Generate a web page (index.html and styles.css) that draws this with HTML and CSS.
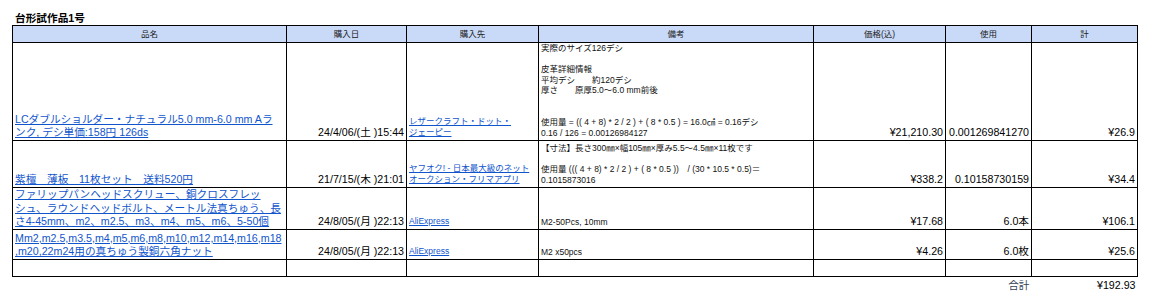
FILE: index.html
```html
<!DOCTYPE html>
<html lang="ja">
<head>
<meta charset="utf-8">
<title>台形試作品1号</title>
<link rel="stylesheet" href="styles.css">
</head>
<body>
<div class="sheet">
  <div class="title">台形試作品1号</div>
  <table class="grid">
    <colgroup>
      <col class="c-name"><col class="c-date"><col class="c-shop"><col class="c-note"><col class="c-price"><col class="c-use"><col class="c-sum">
    </colgroup>
    <thead>
      <tr class="r-head">
        <th>品名</th><th>購入日</th><th>購入先</th><th>備考</th><th>価格(込)</th><th>使用</th><th>計</th>
      </tr>
    </thead>
    <tbody>
      <tr class="r1">
        <td class="name"><a href="#">LCダブルショルダー・ナチュラル5.0 mm-6.0 mm Aラ<br>ンク, デシ単価:158円 126ds</a></td>
        <td class="num">24/4/06/(土 )15:44</td>
        <td class="shop"><a href="#">レザークラフト・ドット・<br>ジェーピー</a></td>
        <td class="note">実際のサイズ126デシ<br><br>皮革詳細情報<br>平均デシ　　約120デシ<br>厚さ　　原厚5.0～6.0 mm前後<br><br><br>使用量 = (( 4 + 8) * 2 / 2 ) + ( 8 * 0.5 ) = 16.0㎠ = 0.16デシ<br>0.16 / 126 = 0.00126984127</td>
        <td class="num">¥21,210.30</td>
        <td class="num">0.001269841270</td>
        <td class="num">¥26.9</td>
      </tr>
      <tr class="r2">
        <td class="name"><a href="#">紫檀　薄板　11枚セット　送料520円</a></td>
        <td class="num">21/7/15/(木 )21:01</td>
        <td class="shop"><a href="#">ヤフオク! - 日本最大級のネット<br>オークション・フリマアプリ</a></td>
        <td class="note">【寸法】長さ300㎜×幅105㎜×厚み5.5～4.5㎜×11枚です<br><br>使用量 ((( 4 + 8) * 2 / 2 ) + ( 8 * 0.5 ))　/ (30 * 10.5 * 0.5)＝<br>0.1015873016</td>
        <td class="num">¥338.2</td>
        <td class="num">0.10158730159</td>
        <td class="num">¥34.4</td>
      </tr>
      <tr class="r3">
        <td class="name"><a href="#">ファリップパンヘッドスクリュー、銅クロスフレッ<br>シュ、ラウンドヘッドボルト、メートル法真ちゅう、長<br>さ4-45mm、m2、m2.5、m3、m4、m5、m6、5-50個</a></td>
        <td class="num">24/8/05/(月 )22:13</td>
        <td class="shop"><a href="#">AliExpress</a></td>
        <td class="note">M2-50Pcs, 10mm</td>
        <td class="num">¥17.68</td>
        <td class="num">6.0本</td>
        <td class="num">¥106.1</td>
      </tr>
      <tr class="r4">
        <td class="name"><a href="#">Mm2,m2.5,m3.5,m4,m5,m6,m8,m10,m12,m14,m16,m18<br>,m20,22m24用の真ちゅう製銅六角ナット</a></td>
        <td class="num">24/8/05/(月 )22:13</td>
        <td class="shop"><a href="#">AliExpress</a></td>
        <td class="note">M2 x50pcs</td>
        <td class="num">¥4.26</td>
        <td class="num">6.0枚</td>
        <td class="num">¥25.6</td>
      </tr>
      <tr class="r5">
        <td></td><td></td><td></td><td></td><td></td><td></td><td></td>
      </tr>
    </tbody>
    <tfoot>
      <tr class="r-total">
        <td></td><td></td><td></td><td></td><td></td>
        <td class="num total-label">合計</td>
        <td class="num">¥192.93</td>
      </tr>
    </tfoot>
  </table>
</div>
</body>
</html>
```

FILE: styles.css
```css
html, body {
  margin: 0;
  padding: 0;
  background: #ffffff;
}

body {
  font-family: "Liberation Sans", Arial, "Noto Sans CJK JP", sans-serif;
  color: #000000;
}

.sheet {
  padding: 11px 0 0 12px;
}

.title {
  font-size: 10.67px;
  font-weight: bold;
  line-height: 14px;
  height: 14px;
  padding-left: 3px;
}

.grid {
  border-collapse: collapse;
  table-layout: fixed;
  width: 1126px;
}

.c-name { width: 274px; }
.c-date { width: 120px; }
.c-shop { width: 132px; }
.c-note { width: 275px; }
.c-price { width: 132px; }
.c-use { width: 86px; }
.c-sum { width: 106px; }

.grid th,
.grid td {
  border: 1px solid #000000;
  padding: 0 2px 1px 2px;
  vertical-align: bottom;
  font-size: 10.67px;
  line-height: 13.3px;
  overflow: hidden;
}

.grid th {
  background: #c9daf8;
  font-weight: normal;
  font-size: 8.5px;
  line-height: 11px;
  color: #222222;
  text-align: center;
  vertical-align: middle;
  padding: 0 2px;
}

.grid a {
  color: #1155cc;
  text-decoration: underline;
}

.grid .num {
  text-align: right;
  white-space: nowrap;
}

.grid .shop {
  font-size: 8.5px;
  line-height: 11px;
  padding-bottom: 2px;
}

.grid .note {
  font-size: 8.5px;
  line-height: 10.6px;
  padding-bottom: 2px;
  color: #111111;
}

.r-head { height: 17px; }
.r1 { height: 98px; }
.r2 { height: 47px; }
.r3 { height: 41px; }
.r4 { height: 30px; }
.r5 { height: 17px; }

.grid .r-total td {
  border: none;
  height: 17px;
  vertical-align: middle;
}

.grid .total-label {
  color: #34425a;
}
```
